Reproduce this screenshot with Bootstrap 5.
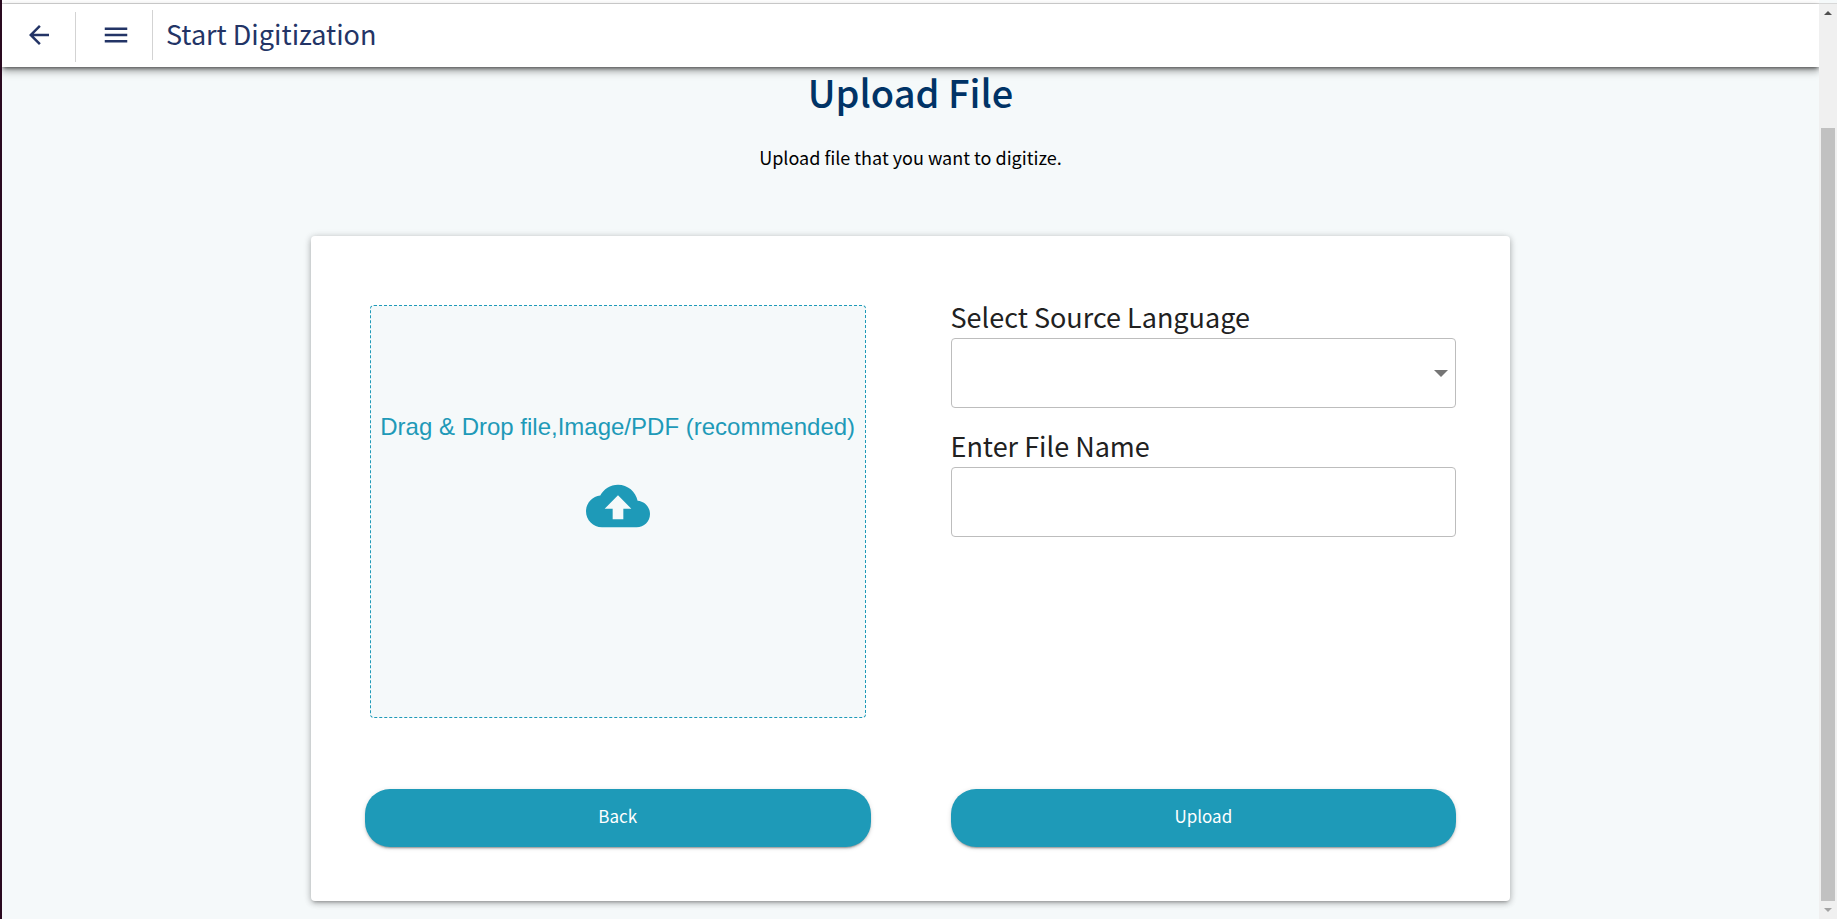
<!DOCTYPE html>
<html lang="en">
<head>
<meta charset="utf-8">
<meta name="viewport" content="width=device-width, initial-scale=1">
<title>Start Digitization</title>
<link href="https://cdn.jsdelivr.net/npm/bootstrap@5.3.0/dist/css/bootstrap.min.css" rel="stylesheet">
<style>
  :root { --teal: #1e9ab8; --navy: #233466; --mist: #f5f9fa; }
  body { font-family: "Noto Sans CJK SC", "Noto Sans", sans-serif; background: var(--mist); color: #000; border-left: 2px solid #2a0a20; }
  .window-edge { height: 4px; background: #fff; border-bottom: 1px solid #d8d8d8; }
  .app-bar { height: 63px; padding-top: 6px; background: #fff; color: var(--navy); box-shadow: 0 2px 4px -1px rgba(0,0,0,.6), 0 4px 8px rgba(0,0,0,.35); position: relative; }
  .bar-cell { height: 50px; border-right: 1px solid #d3d3d3; }
  .bar-back { width: 74px; margin-top: 2px; }
  .bar-menu { width: 77px; }
  .bar-btn { color: inherit; line-height: 0; }
  .bar-title { font-size: 27px; line-height: 48px; font-weight: 400; margin-left: 13px; }
  .page-title { color: #003366; font-size: 38px; line-height: 50px; font-weight: 500; }
  .page-hint { font-size: 18px; line-height: 28px; margin-top: 26px; }
  .upload-card { width: 66%; margin-top: 65px; padding: 62px 54px 54px; border-radius: 4px; background: #fff; box-shadow: 0 3px 3px -2px rgba(0,0,0,.2), 0 2px 6px rgba(0,0,0,.24), 0 1px 8px rgba(0,0,0,.12); }
  .form-row { --bs-gutter-x: 80px; --bs-gutter-y: 0; }
  .drop-zone { margin: 7px 5px 71px; height: 413px; padding-top: 103px; border: 1px dashed var(--teal); border-radius: 4px; background: var(--mist); color: var(--teal); cursor: pointer; }
  .drop-text { font-family: "Liberation Sans", Arial, sans-serif; font-size: 24px; line-height: 36px; margin-bottom: 29px; }
  .field-label { font-size: 27px; line-height: 38px; color: #212121; margin-bottom: 2px; }
  .field-box { height: 70px; border: 1px solid #bdbdbd; border-radius: 4px; font-size: 18px; }
  .field-gap { margin-bottom: 19px; }
  .language-select { background-image: url("data:image/svg+xml,%3Csvg xmlns='http://www.w3.org/2000/svg' viewBox='0 0 14 7'%3E%3Cpath fill='%23757575' d='M0 0h14L7 7z'/%3E%3C/svg%3E"); background-size: 14px 7px; background-position: right 7px center; }
  .pill-btn { --bs-btn-color: #fff; --bs-btn-bg: var(--teal); --bs-btn-hover-color: #fff; --bs-btn-hover-bg: #1a86a0; height: 58px; padding: 0 12px 4px; border: 0; border-radius: 25px; font-size: 17px; line-height: 28px; box-shadow: 0 3px 1px -2px rgba(0,0,0,.2), 0 2px 2px rgba(0,0,0,.14), 0 1px 5px rgba(0,0,0,.12); }
  .scroll-rail { width: 18px; background: #f0f0f0; border-top: 1px solid #d8d8d8; margin-top: 3px; padding: 0 2px; }
  .rail-arrow { height: 18px; line-height: 0; }
  .rail-space { flex: 106 0 0; }
  .rail-thumb { flex: 773 0 0; background: #c1c1c1; }
</style>
</head>
<body class="d-flex min-vh-100">
  <div class="flex-grow-1 overflow-hidden">
    <div class="window-edge"></div>
    <header class="app-bar d-flex align-items-start">
      <div class="bar-cell bar-back d-flex align-items-center justify-content-center pb-1">
        <button type="button" class="btn p-0 border-0 bar-btn" aria-label="Go back">
          <svg width="30" height="30" viewBox="0 0 24 24" fill="currentColor" aria-hidden="true"><path d="M20 11H7.83l5.59-5.59L12 4l-8 8 8 8 1.41-1.41L7.83 13H20v-2z"/></svg>
        </button>
      </div>
      <div class="bar-cell bar-menu d-flex align-items-center justify-content-center ps-1">
        <button type="button" class="btn p-0 border-0 bar-btn" aria-label="Open menu">
          <svg width="30" height="30" viewBox="0 0 24 24" fill="currentColor" aria-hidden="true"><path d="M3 18h18v-2H3v2zm0-5h18v-2H3v2zm0-7v2h18V6H3z"/></svg>
        </button>
      </div>
      <div class="bar-title">Start Digitization</div>
    </header>
    <main class="d-flex flex-column align-items-center">
      <h1 class="page-title mb-0">Upload File</h1>
      <p class="page-hint mb-0">Upload file that you want to digitize.</p>
      <form class="upload-card">
        <div class="row form-row">
          <div class="col-6">
            <label for="source-file" class="drop-zone d-flex flex-column align-items-center">
              <span class="drop-text text-nowrap">Drag &amp; Drop file,Image/PDF (recommended)</span>
              <svg width="64" height="64" viewBox="0 0 24 24" fill="currentColor" aria-hidden="true"><path d="M19.35 10.04C18.67 6.59 15.64 4 12 4 9.11 4 6.6 5.64 5.35 8.04 2.34 8.36 0 10.91 0 14c0 3.31 2.69 6 6 6h13c2.76 0 5-2.24 5-5 0-2.64-2.05-4.78-4.65-4.96zM14 13v4h-4v-4H7l5-5 5 5h-3z"/></svg>
              <input type="file" id="source-file" class="visually-hidden">
            </label>
          </div>
          <div class="col-6">
            <label for="language" class="field-label d-block">Select Source Language</label>
            <select id="language" class="form-select field-box field-gap language-select"><option value=""></option></select>
            <label for="file-name" class="field-label d-block">Enter File Name</label>
            <input type="text" id="file-name" class="form-control field-box">
          </div>
          <div class="col-6"><button type="button" class="btn pill-btn w-100">Back</button></div>
          <div class="col-6"><button type="submit" class="btn pill-btn w-100">Upload</button></div>
        </div>
      </form>
    </main>
  </div>
  <aside class="scroll-rail d-flex flex-column flex-shrink-0" aria-hidden="true">
    <div class="rail-arrow d-flex align-items-center justify-content-center"><svg width="8" height="4" viewBox="0 0 8 4"><path fill="#505050" d="M0 4h8L4 0z"/></svg></div>
    <div class="rail-space"></div>
    <div class="rail-thumb"></div>
    <div class="rail-arrow d-flex align-items-center justify-content-center"><svg width="8" height="4" viewBox="0 0 8 4"><path fill="#a3a3a3" d="M0 0h8L4 4z"/></svg></div>
  </aside>
<script src="https://cdn.jsdelivr.net/npm/bootstrap@5.3.0/dist/js/bootstrap.bundle.min.js"></script>
</body>
</html>
